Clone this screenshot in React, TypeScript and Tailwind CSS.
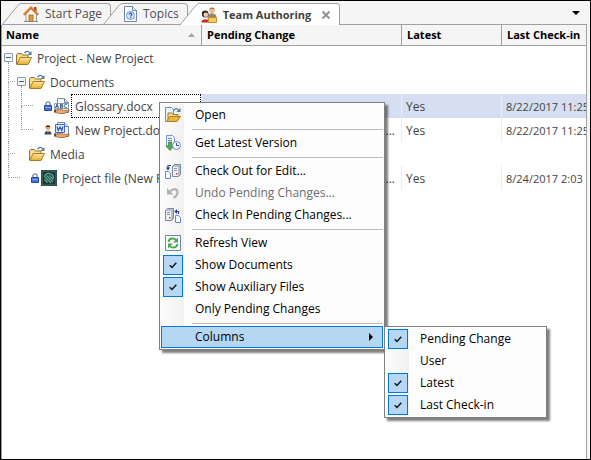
import { type ReactNode } from "react";

const Svg = ({ children, w = 16, h = 16 }: { children: ReactNode; w?: number; h?: number }) => (
  <svg width={w} height={h} viewBox={`0 0 ${w} ${h}`} className="shrink-0" aria-hidden="true">
    {children}
  </svg>
);

/* ---------- Icons ---------- */

const FolderIcon = () => (
  <Svg>
    <defs>
      <linearGradient id="folderFront" x1="0" y1="0" x2="0" y2="1">
        <stop offset="0" stopColor="#ffeaa0" />
        <stop offset="1" stopColor="#e8a92c" />
      </linearGradient>
    </defs>
    <path d="M.5 14V4.500l1-1h4l1 1.500h5.500v3" fill="#f6dc8c" stroke="#8f7436" />
    <path d="M.8 14.500 4.200 7.500h11.300L12 14.500z" fill="url(#folderFront)" stroke="#a97c22" />
    <path d="M8.500 3.200C9.800.8 12.300.6 13.700 3" fill="none" stroke="#5a7a9c" strokeWidth="1.300" />
    <path d="M15.500 1v4h-4z" fill="#5a7a9c" />
  </Svg>
);

const HomeIcon = () => (
  <Svg>
    <path d="M11 1h2.500v5H11z" fill="#b5451f" />
    <path d="M3 8v7.500h10.500V8L8 2.500z" fill="#fbf7ef" stroke="#9b958a" />
    <path d="M.8 8.800 8 1.500l7.300 7.300" fill="none" stroke="#c96a1c" strokeWidth="2.200" />
    <path d="M1.200 8 8 1.200 14.800 8" fill="none" stroke="#f4b65a" strokeWidth=".7" />
    <path d="M6 9h4v6.500H6z" fill="#e79a2c" stroke="#a4621a" strokeWidth=".8" />
    <path d="M1 15.500h14" stroke="#7c8793" />
  </Svg>
);

const TopicIcon = () => (
  <Svg w={13}>
    <path d="M.5.500h8l4 4v11H.5z" fill="#fbfdff" stroke="#7189a5" />
    <path d="M8.500.500v4h4" fill="#dbe6f2" stroke="#7189a5" />
    <circle cx="6.500" cy="9.500" r="4" fill="#dfeaff" stroke="#6b93d8" />
    <path d="M5.200 8.600c0-2 3-1.800 2.700 0-.1.800-1.300.9-1.300 2M6.600 11.300v1" fill="none" stroke="#2450b8" strokeWidth="1.200" />
  </Svg>
);

const TeamIcon = () => (
  <Svg>
    <circle cx="11" cy="3.300" r="2.800" fill="#e9b98d" />
    <path d="M8 3C8-.500 14-.500 14 3l-1-1H9z" fill="#b57a3c" />
    <path d="M6.500 10c0-5 9-5 9 0v3h-9z" fill="#8d8d80" />
    <circle cx="4.200" cy="7" r="3.400" fill="#2e2a2c" />
    <circle cx="4.800" cy="7.800" r="2.300" fill="#f1c8a8" />
    <path d="M.3 15.500c0-4.500 7.500-4.500 7.500 0z" fill="#d7202a" />
    <path d="M7.500 10.500h8v5h-8z" fill="#f3cb62" stroke="#c18f2d" />
    <path d="M10 10.500V9.200h3v1.300" fill="none" stroke="#b18128" />
  </Svg>
);

const LockIcon = () => (
  <Svg w={8} h={10}>
    <path d="M2 5V2.800C2 .300 6 .300 6 2.800V5" fill="none" stroke="#6d7f9c" strokeWidth="1.300" />
    <path d="M.5 4.500h7v5h-7z" fill="#4672d8" stroke="#2a4ba4" />
    <path d="M1.500 6.500h5" stroke="#8fb0f5" />
  </Svg>
);

const UserIcon = () => (
  <Svg w={8} h={10}>
    <circle cx="4" cy="2.800" r="2.300" fill="#e8a071" />
    <path d="M1.500 2.800C1.500-.500 6.500-.500 6.500 2.800L5.500 2h-3z" fill="#5c2d19" />
    <path d="M.5 9.500C.5 4.500 7.500 4.500 7.500 9.500z" fill="#34466e" />
    <path d="m2.800 6 1.200 2 1.200-2z" fill="#f5a13a" />
  </Svg>
);

const DocIcon = ({ kind }: { kind: "spelling" | "word" }) => (
  <Svg>
    <path d="M3.500.500h7l4 4v10h-11z" fill="#f7faff" stroke="#7189a5" />
    <path d="M10.500.500v4h4" fill="#dbe6f2" stroke="#7189a5" />
    {kind === "word" ? (
      <>
        <path d="M1.500 2.500h9v8h-9z" fill="#e4edff" stroke="#3d66c4" />
        <path d="m3 4.500 1.200 4L6 5l1.800 3.500 1.200-4" fill="none" stroke="#2450b8" strokeWidth="1.200" />
      </>
    ) : (
      <>
        <path d="M.5 5.500h14v5H.5z" fill="#f3f6fc" stroke="#8da1bd" />
        <path d="m1.500 10 1.500-4 1.500 4M2 8.700h2M6.500 6.300v3.400h1.300c1.500 0 1.500-1.800 0-1.800H6.500h1.300c1.300 0 1.300-1.600 0-1.600zM13 6.800c-2-1.500-3 0-2.500 1.800.3 1.400 1.600 1.400 2.500.6" fill="none" stroke="#354f7c" strokeWidth=".9" />
      </>
    )}
    <path d="M1 12h3l3.500-.8 2 1.200 5.500-.400v1.500l-5 2H4.500L1 14z" fill="#eda768" stroke="#8a542c" strokeWidth=".7" />
    <path d="M0 11.500h2v3H0z" fill="#4b4f5c" />
  </Svg>
);

const ProjectIcon = () => (
  <Svg>
    <path d="M0 0h16v16H0z" fill="#26373c" />
    <path d="M1 1h14v14H1z" fill="none" stroke="#38776a" />
    <path
      d="M3.500 7C3.500 2 12.500 2 12.500 8.500M5.500 5.500 12 12M3.500 6.500 10 13M3.500 9.500 6.500 12.500M8 5.200 12.300 9.500"
      fill="none"
      stroke="#58b597"
      strokeWidth="1.100"
    />
  </Svg>
);

const OpenIcon = () => (
  <Svg>
    <path d="M.5.500h6l2 2v12h-8z" fill="#edf4fc" stroke="#6e8db3" />
    <path d="M3 13V6h4l1 1.500h5V10" fill="#f7dd8b" stroke="#8f7436" />
    <path d="M1.500 14.500 5 9.500h10.500L12 14.500z" fill="#efb638" stroke="#a97c22" />
    <path d="M9 3.500C10 1 12.300 1 13.500 3" fill="none" stroke="#5a7a9c" strokeWidth="1.300" />
    <path d="M15.500 1v4h-4z" fill="#5a7a9c" />
  </Svg>
);

const LatestIcon = () => (
  <Svg>
    <path d="M1.500.500h6l2 2v9h-8z" fill="#eef3ff" stroke="#7d96c6" />
    <path d="M3 3.500h4M3 5.500h4" stroke="#6d8fd0" />
    <path d="M3.500 7h3v4H9l-4 4.500L1 11h2.500z" fill="#4fae4c" stroke="#2b7f2d" strokeWidth=".7" />
    <circle cx="11.500" cy="10.500" r="4" fill="#f1f5ff" stroke="#7487c0" />
    <path d="M11.500 8v2.500H14" fill="none" stroke="#3d4f8d" />
  </Svg>
);

const Server = ({ x, y }: { x: number; y: number }) => (
  <g transform={`translate(${x} ${y})`}>
    <path d="m.5 2.500 2-2h6v10l-2 2h-6z" fill="#b4bfce" stroke="#7c899d" />
    <path d="M1 3h5v9H1z" fill="#eff3f8" />
    <path d="M2 4.500h3M2 6.500h3" stroke="#8a96a8" />
    <path d="M4 9h1.500v1.500H4z" fill="#d03a3a" />
  </g>
);

const CheckOutIcon = () => (
  <Svg>
    <Server x={7} y={1} />
    <path d="M.5 8.500h3l2 2v5h-5z" fill="#f4f8ff" stroke="#6f89c5" />
    <path d="M6 2.500H3V6" fill="none" stroke="#2a3fa0" strokeWidth="1.200" />
    <path d="M.8 4.500h4.400L3 7.500z" fill="#2a3fa0" />
  </Svg>
);

const CheckInIcon = () => (
  <Svg>
    <Server x={0} y={1} />
    <path d="M10.500 8.500h3l2 2v5h-5z" fill="#f4f8ff" stroke="#6f89c5" />
    <path d="M11 4.500h2.500V7" fill="none" stroke="#2a3fa0" strokeWidth="1.200" />
    <path d="M12 2v5L9.300 4.500z" fill="#2a3fa0" />
  </Svg>
);

const UndoIcon = () => (
  <Svg>
    <path d="M5 6.500C8 3 12.500 3.500 12.500 7.500c0 2.500-1.500 4-4 5.500" fill="none" stroke="#b4b4b4" strokeWidth="2.200" />
    <path d="M2 3v6.500h6.500z" fill="#b4b4b4" />
  </Svg>
);

const RefreshIcon = () => (
  <Svg>
    <path d="M.5.500h15v15H.5z" fill="#fff" stroke="#72879f" />
    <path d="M3.500 7c.5-4 5.500-4.500 7.500-2M12.500 9c-.5 4-5.500 4.500-7.500 2" fill="none" stroke="#48a750" strokeWidth="2" />
    <path d="M13 2.500V7.500H8zM3 13.500v-5h5z" fill="#48a750" />
  </Svg>
);

/* ---------- Tabs ---------- */

const Tab = ({ icon, label, active = false }: { icon: ReactNode; label: string; active?: boolean }) => (
  <div className={`flex h-[22px] ${active ? "-ml-2 text-[#404040]" : "text-[#505050] not-first:-ml-2"}`}>
    <svg width="19" height="22" viewBox="0 0 19 22" className="relative shrink-0" aria-hidden="true">
      <path d="M0 22 15 3.500Q17.500.500 19 .500V22z" fill={active ? "#fff" : "#f6f5f6"} />
      <path d="M0 22 15 3.500Q17.500.500 19 .500" fill="none" stroke="#a0a0a0" />
      {!active && <path d="M0 21.500h19" stroke="#a0a0a0" />}
    </svg>
    <div
      className={`flex items-center rounded-tr border-t border-r border-[#a0a0a0] pr-2 ${
        active ? "bg-white" : "border-b bg-[#f6f5f6]"
      }`}
    >
      <button
        role="tab"
        aria-selected={active}
        className={`flex items-center gap-1.5 pl-0.5 ${active ? "text-[11px] font-bold" : ""}`}
      >
        {icon}
        {label}
      </button>
      {active && (
        <button aria-label="Close tab" className="ml-2.5 p-px">
          <Svg w={8} h={8}>
            <path d="m.5.500 7 7m0-7-7 7" stroke="#929292" strokeWidth="2" />
          </Svg>
        </button>
      )}
    </div>
  </div>
);

/* ---------- Tree ---------- */

const Toggle = () => (
  <span className="flex h-6 w-[13px] shrink-0 flex-col items-start pl-0.5">
    <span className="h-[7px]" />
    <button aria-label="Collapse" className="flex size-[9px] items-center justify-center rounded-[1px] border border-[#8f9aa8] bg-[#f4f6f8]">
      <span className="h-px w-[5px] bg-[#3c5a9c]" />
    </button>
    <span className="ml-1 flex-1 border-l border-dotted border-[#a0a0a0]" />
  </span>
);

const Guide = ({ branch = true, last = false, wide = false }: { branch?: boolean; last?: boolean; wide?: boolean }) => (
  <span className={`flex h-6 shrink-0 flex-col pl-1.5 ${wide ? "w-[18px]" : "w-[13px]"}`}>
    <span className={`h-3 border-l border-dotted border-[#a0a0a0] ${branch ? "border-b" : ""}`} />
    <span className={`h-3 border-dotted border-[#a0a0a0] ${last ? "" : "border-l"}`} />
  </span>
);

type Row = {
  name: string;
  guides: ReactNode;
  status?: ReactNode;
  icon: ReactNode;
  change?: string;
  latest?: string;
  checkIn?: string;
  selected?: boolean;
};

const rows: Row[] = [
  { name: "Project - New Project", guides: <Toggle />, icon: <FolderIcon /> },
  { name: "Documents", guides: <><Guide /><Toggle /></>, icon: <FolderIcon /> },
  {
    name: "Glossary.docx",
    guides: <><Guide branch={false} /><Guide wide /></>,
    status: <LockIcon />,
    icon: <DocIcon kind="spelling" />,
    latest: "Yes",
    checkIn: "8/22/2017 11:25",
    selected: true,
  },
  {
    name: "New Project.docx",
    guides: <><Guide branch={false} /><Guide wide last /></>,
    status: <UserIcon />,
    icon: <DocIcon kind="word" />,
    change: "...",
    latest: "Yes",
    checkIn: "8/22/2017 11:25",
  },
  { name: "Media", guides: <><Guide /><span className="w-[13px]" /></>, icon: <FolderIcon /> },
  {
    name: "Project file (New P",
    guides: <Guide last wide />,
    status: <LockIcon />,
    icon: <ProjectIcon />,
    change: "...",
    latest: "Yes",
    checkIn: "8/24/2017 2:03",
  },
];

const td = "overflow-hidden border-l border-[#ececec] p-0 pt-0.5 pl-1 whitespace-nowrap";

const TreeRow = ({ row }: { row: Row }) => {
  const fill = row.selected ? "bg-[#d5dff1]" : "";
  return (
    <tr className="h-6">
      <td className="p-0">
        <div className="flex h-6 items-center whitespace-nowrap">
          {row.guides}
          {row.status && <span className="mr-px ml-[11px]">{row.status}</span>}
          <span className="ml-px">{row.icon}</span>
          <span
            className={`flex h-6 items-center overflow-hidden pt-0.5 ${
              row.selected ? "ml-px flex-1 border border-dotted border-black pl-[3px]" : "pl-[5px]"
            }`}
          >
            {row.name}
          </span>
        </div>
      </td>
      {row.latest && (
        <>
          <td className={`${td} pr-1.5 text-right ${fill}`}>{row.change}</td>
          <td className={`${td} ${fill}`}>{row.latest}</td>
          <td className={`${td} text-[11px] ${fill}`}>{row.checkIn}</td>
        </>
      )}
    </tr>
  );
};

/* ---------- Menus ---------- */

const menuBox = "absolute border border-[#808080] bg-[#fdfdfd] p-px text-black shadow-[3px_3px_2px_rgba(0,0,0,0.5)]";
const gutter = "flex h-[22px] w-[23px] shrink-0 items-center justify-center bg-linear-to-r from-[#fcfcfc] to-[#f1f1f1]";

const MenuItem = ({ label, icon, disabled = false }: { label: string; icon?: ReactNode; disabled?: boolean }) => (
  <button
    role="menuitem"
    disabled={disabled}
    className={`flex h-[22px] w-full items-center whitespace-nowrap ${disabled ? "text-[#6d6d6d]" : ""}`}
  >
    <span className={gutter}>{icon}</span>
    <span className="pl-[11px]">{label}</span>
  </button>
);

const CheckItem = ({ label, checked = false }: { label: string; checked?: boolean }) => (
  <label className="flex h-[22px] items-center whitespace-nowrap">
    <span className={gutter}>
      <span className="grid place-items-center">
        <input
          type="checkbox"
          defaultChecked={checked}
          className="peer col-start-1 row-start-1 size-5 appearance-none checked:border checked:border-[#0078d7] checked:bg-[#b5d7f3]"
        />
        <svg width="8" height="7" viewBox="0 0 8 7" className="invisible col-start-1 row-start-1 peer-checked:visible" aria-hidden="true">
          <path d="m.7 3.200 2.300 2.300L7.300.8" fill="none" stroke="#101820" strokeWidth="1.500" />
        </svg>
      </span>
    </span>
    <span className="pl-[11px]">{label}</span>
  </label>
);

const Separator = () => (
  <div role="separator" className="flex h-1.5">
    <span className="w-[23px] bg-linear-to-r from-[#fcfcfc] to-[#f1f1f1]" />
    <span className="mt-[3px] ml-2 h-px flex-1 bg-[#bdbdbd]" />
  </div>
);

const ContextMenu = () => (
  <div role="menu" className={`${menuBox} top-[101px] left-[158px] w-[226px]`}>
    <MenuItem label="Open" icon={<OpenIcon />} />
    <Separator />
    <MenuItem label="Get Latest Version" icon={<LatestIcon />} />
    <Separator />
    <MenuItem label="Check Out for Edit..." icon={<CheckOutIcon />} />
    <MenuItem label="Undo Pending Changes..." icon={<UndoIcon />} disabled />
    <MenuItem label="Check In Pending Changes..." icon={<CheckInIcon />} />
    <Separator />
    <MenuItem label="Refresh View" icon={<RefreshIcon />} />
    <CheckItem label="Show Documents" checked />
    <CheckItem label="Show Auxiliary Files" checked />
    <MenuItem label="Only Pending Changes" />
    <Separator />
    <div className="relative">
      <button
        role="menuitem"
        aria-haspopup="menu"
        aria-expanded="true"
        className="flex h-[22px] w-full items-center justify-between border border-[#0078d7] bg-[#b5d7f3] pr-2 pl-[33px]"
      >
        Columns
        <Svg w={5} h={8}>
          <path d="M0 0v8l4-4z" fill="#000" />
        </Svg>
      </button>
      <div role="menu" className={`${menuBox} top-0 left-[223px] w-[163px]`}>
        <CheckItem label="Pending Change" checked />
        <CheckItem label="User" />
        <CheckItem label="Latest" checked />
        <CheckItem label="Last Check-in" checked />
      </div>
    </div>
  </div>
);

/* ---------- Window ---------- */

const th = "overflow-hidden border-l border-[#a0a0a0] p-0 pl-[5px] text-left font-bold whitespace-nowrap";

export default function App() {
  return (
    <div className="relative flex min-h-screen flex-col border border-black bg-[#f6f5f6] font-['Open_Sans','Noto_Sans',sans-serif] text-[12px] leading-4 text-[#444]">
      <div className="mr-[3px] flex h-6 items-end">
        <div role="tablist" className="flex pl-px">
          <Tab icon={<HomeIcon />} label="Start Page" />
          <Tab icon={<TopicIcon />} label="Topics" />
          <Tab icon={<TeamIcon />} label="Team Authoring" active />
        </div>
        <div className="flex h-6 flex-1 items-center justify-end border-b border-[#a0a0a0] pr-1.5">
          <button aria-label="List tabs" className="p-px">
            <Svg w={8} h={4}>
              <path d="M0 0h8L4 4z" fill="#000" />
            </Svg>
          </button>
        </div>
      </div>
      <main className="mr-[3px] flex-1 overflow-hidden border-x border-[#a0a0a0] bg-white">
        <table className="w-full table-fixed border-separate border-spacing-0">
          <colgroup>
            <col className="w-[199px]" />
            <col className="w-[200px]" />
            <col className="w-[100px]" />
            <col />
          </colgroup>
          <thead className="bg-[#f6f5f6] text-[11px] text-black">
            <tr className="h-[21px] *:border-b *:border-[#a0a0a0]">
              <th className="p-0 pr-1.5 pl-1 text-left font-bold">
                <span className="flex items-center justify-between">
                  Name
                  <Svg w={7} h={4}>
                    <path d="M0 4h7L3.500 0z" fill="#9aa9b8" />
                  </Svg>
                </span>
              </th>
              <th className={th}>Pending Change</th>
              <th className={th}>Latest</th>
              <th className={th}>Last Check-in</th>
            </tr>
          </thead>
          <tbody>
            {rows.map((row) => (
              <TreeRow key={row.name} row={row} />
            ))}
          </tbody>
        </table>
      </main>
      <ContextMenu />
    </div>
  );
}
